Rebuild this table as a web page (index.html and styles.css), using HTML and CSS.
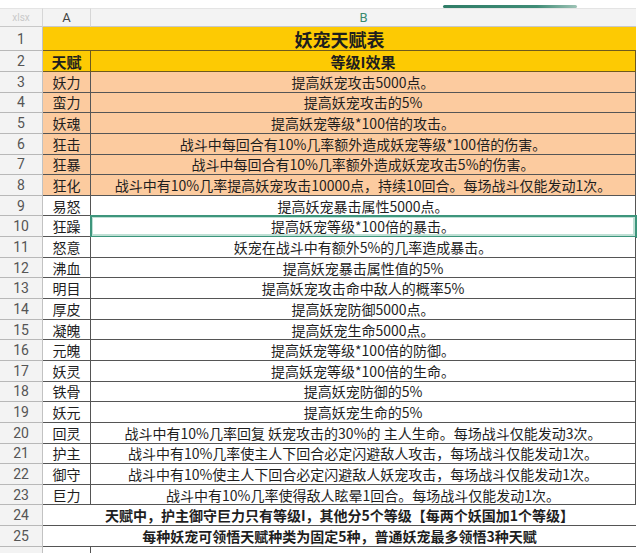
FILE: index.html
```html
<!DOCTYPE html>
<html lang="zh">
<head>
<meta charset="utf-8">
<link rel="stylesheet" href="styles.css">
</head>
<body>
<div class="page">
  <div class="topbar"><div class="scroll"></div></div>
  <div class="sheet">
    <div class="hd corner">xlsx</div><div class="hd">A</div><div class="hd colb">B</div>

    <div class="rn">1</div><div class="c yellow span title">妖宠天赋表</div>
    <div class="rn">2</div><div class="c yellow head">天赋</div><div class="c yellow head">等级I效果</div>

    <div class="rn">3</div><div class="c peach">妖力</div><div class="c peach">提高妖宠攻击5000点。</div>
    <div class="rn">4</div><div class="c peach">蛮力</div><div class="c peach">提高妖宠攻击的5%</div>
    <div class="rn">5</div><div class="c peach">妖魂</div><div class="c peach">提高妖宠等级*100倍的攻击。</div>
    <div class="rn">6</div><div class="c peach">狂击</div><div class="c peach">战斗中每回合有10%几率额外造成妖宠等级*100倍的伤害。</div>
    <div class="rn">7</div><div class="c peach">狂暴</div><div class="c peach">战斗中每回合有10%几率额外造成妖宠攻击5%的伤害。</div>
    <div class="rn">8</div><div class="c peach">狂化</div><div class="c peach">战斗中有10%几率提高妖宠攻击10000点，持续10回合。每场战斗仅能发动1次。</div>
    <div class="rn">9</div><div class="c">易怒</div><div class="c">提高妖宠暴击属性5000点。</div>
    <div class="rn">10</div><div class="c">狂躁</div><div class="c sel">提高妖宠等级*100倍的暴击。</div>
    <div class="rn">11</div><div class="c">怒意</div><div class="c">妖宠在战斗中有额外5%的几率造成暴击。</div>
    <div class="rn">12</div><div class="c">沸血</div><div class="c">提高妖宠暴击属性值的5%</div>
    <div class="rn">13</div><div class="c">明目</div><div class="c">提高妖宠攻击命中敌人的概率5%</div>
    <div class="rn">14</div><div class="c">厚皮</div><div class="c">提高妖宠防御5000点。</div>
    <div class="rn">15</div><div class="c">凝魄</div><div class="c">提高妖宠生命5000点。</div>
    <div class="rn">16</div><div class="c">元魄</div><div class="c">提高妖宠等级*100倍的防御。</div>
    <div class="rn">17</div><div class="c">妖灵</div><div class="c">提高妖宠等级*100倍的生命。</div>
    <div class="rn">18</div><div class="c">铁骨</div><div class="c">提高妖宠防御的5%</div>
    <div class="rn">19</div><div class="c">妖元</div><div class="c">提高妖宠生命的5%</div>
    <div class="rn">20</div><div class="c">回灵</div><div class="c">战斗中有10%几率回复 妖宠攻击的30%的 主人生命。每场战斗仅能发动3次。</div>
    <div class="rn">21</div><div class="c">护主</div><div class="c">战斗中有10%几率使主人下回合必定闪避敌人攻击，每场战斗仅能发动1次。</div>
    <div class="rn">22</div><div class="c">御守</div><div class="c">战斗中有10%使主人下回合必定闪避敌人妖宠攻击，每场战斗仅能发动1次。</div>
    <div class="rn">23</div><div class="c">巨力</div><div class="c">战斗中有10%几率使得敌人眩晕1回合。每场战斗仅能发动1次。</div>
    <div class="rn">24</div><div class="c span bold">天赋中，护主御守巨力只有等级I，其他分5个等级【每两个妖国加1个等级】</div>
    <div class="rn">25</div><div class="c span bold">每种妖宠可领悟天赋种类为固定5种，普通妖宠最多领悟3种天赋</div>
    <div class="rn"></div><div class="c"></div><div class="c"></div>
  </div>
</div>
</body>
</html>
```

FILE: styles.css
```css
* { box-sizing: border-box; }
html, body { margin: 0; padding: 0; background: #fff; }
body {
  width: 640px;
  height: 553px;
  overflow: hidden;
  font-family: "Noto Sans CJK SC", "Noto Sans", sans-serif;
  color: #1e1e1e;
}
.page { width: 640px; }
.topbar {
  height: 8px;
  position: relative;
}
.scroll {
  position: absolute;
  left: 443px;
  top: 5px;
  width: 134px;
  height: 3px;
  border-radius: 2px;
  background: linear-gradient(90deg, #2f7d67 0%, #3f8c76 70%, #9ec3b6 100%);
}
.sheet {
  display: grid;
  width: 636px;
  grid-template-columns: 43px 48px 545px;
  grid-template-rows: 19px 24px 21px repeat(23, 20.65px) 10px;
  border-right: 1px solid #555;
}
.hd {
  background: #f3f3f3;
  border-top: 1px solid #e4e4e4;
  border-right: 1px solid #d6d6d6;
  border-bottom: 1px solid #c8c8c8;
  font-family: Roboto, "Noto Sans", sans-serif;
  font-size: 13px;
  color: #444;
  display: flex;
  align-items: center;
  justify-content: center;
  line-height: 1;
}
.hd.corner { color: #c9c9c9; font-size: 10px; }
.hd.colb { color: #3a8a6e; border-right: none; }
.rn {
  background: #f3f3f3;
  border-right: 1px solid #c2c2c2;
  border-bottom: 1px solid #b8b8b8;
  font-family: Roboto, "Noto Sans", sans-serif;
  font-size: 14px;
  color: #555;
  display: flex;
  align-items: center;
  justify-content: center;
  line-height: 1;
}
.c {
  border-right: 1px solid #555;
  border-bottom: 1px solid #555;
  font-size: 14px;
  display: flex;
  align-items: center;
  justify-content: center;
  white-space: nowrap;
  line-height: 1;
  background: #fff;
}
.c:nth-child(3n) { border-right: none; }
.span { grid-column: 2 / 4; border-right: none; }
.yellow { background: #fdca03; border-bottom-color: #6e5a1e; border-right-color: #6e5a1e; }
.peach { background: #fccb9f; }
.title { font-size: 18px; font-weight: 700; }
.head { font-size: 15px; font-weight: 700; }
.bold { font-weight: 700; }
.sel {
  outline: 2px solid #3d957c;
  outline-offset: -1px;
  box-shadow: inset 0 0 0 2px #bfe0d5;
}
```
